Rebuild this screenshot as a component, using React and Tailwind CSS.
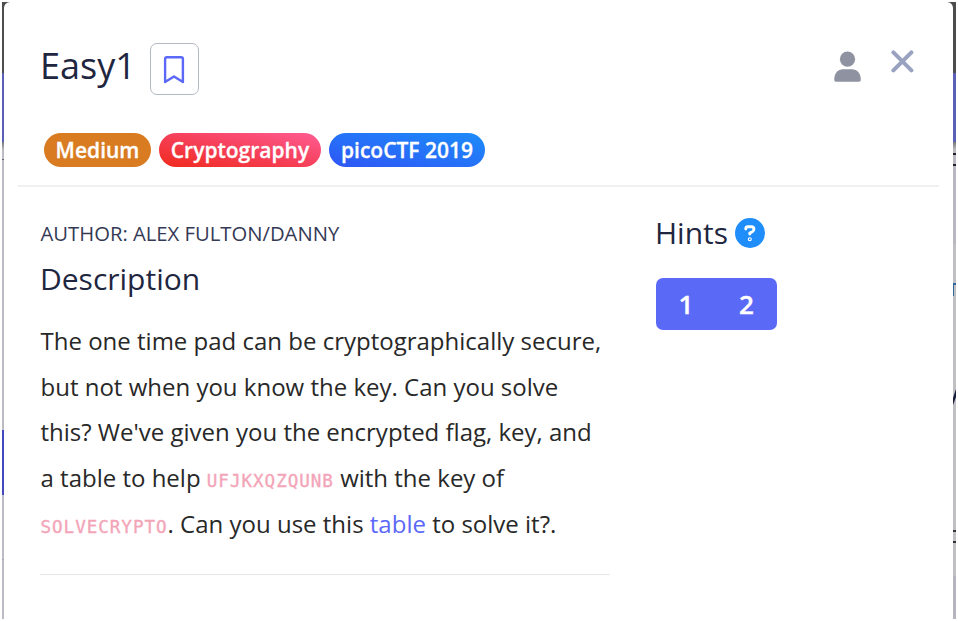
import React from "react";

function Backdrop({ side }) {
  const right = side === "right";
  return (
    <div className={right ? "relative w-[3px] shrink-0 overflow-hidden" : "relative w-[2px] shrink-0 overflow-hidden"}>
      <div className="h-[71px] bg-[#4d4d4d]" />
      <div className="h-[69px] bg-[#5960b5]" />
      <div className="h-[8px] bg-gradient-to-b from-[#777779] to-[#bcbcc1]" />
      {right ? (
        <>
          <div className="h-[94px] bg-[#b9b8c0]" />
          <div className="h-[332px] bg-[#c0bfc4]" />
          <div className="h-[43px] bg-[#b6b5be]" />
          <div className="absolute top-[151px] h-[13px] w-full border-y-2 border-[#222226]" />
          <div className="absolute top-[281px] left-0 h-[13px] w-[3px] border-t-2 border-l border-[#34679a]" />
          <svg className="absolute top-[387px] left-0" width="3" height="16" viewBox="0 0 3 16">
            <path d="M3 0L0 9V16L3 8Z" fill="#171c3c" />
          </svg>
          <div className="absolute top-[528px] h-[13px] w-full border-y-2 border-[#343438]" />
        </>
      ) : (
        <>
          <div className="h-[280px] bg-[#bdbcc4]" />
          <div className="h-[65px] bg-[#444abd]" />
          <div className="h-[124px] bg-[#bdbcc4]" />
          <div className="absolute top-[157px] h-px w-full bg-[#68686c]" />
          <div className="absolute top-[557px] h-px w-full bg-[#aaa9b0]" />
        </>
      )}
    </div>
  );
}

const tags = [
  { label: "Medium", style: "w-[107px] bg-[#d97b21]" },
  { label: "Cryptography", style: "w-[162px] bg-[linear-gradient(12deg,#f02a1c_0%,#f6405a_50%,#ff5c93_100%)]" },
  { label: "picoCTF 2019", style: "w-[156px] bg-[linear-gradient(12deg,#2f55f5_0%,#2572f8_50%,#1c8cf8_100%)]" },
];

function Code({ children }) {
  return (
    <code className="font-['DejaVu_Sans_Mono',monospace] text-[17.6px] leading-none tracking-[0.96px] text-[#f3a5b8] [-webkit-text-stroke:0.35px_#f3a5b8]">{children}</code>
  );
}

export default function App() {
  return (
    <div className="flex h-[621px] w-[958px] overflow-hidden bg-white p-[2px] font-['Open_Sans','Noto_Sans',sans-serif] text-[#1f263f]">
      <div className="flex h-[617px] w-[954px] overflow-hidden bg-[linear-gradient(#4d4d4d_0_20px,transparent_20px)]">
        <Backdrop side="left" />
        <main className="flex w-[949px] shrink-0 flex-col rounded-t-[6px] bg-white">
          <header className="mx-[14px] h-[185px] border-b-2 border-[#f0f0f2] pl-[22px] pr-[24px]">
            <div className="flex h-[131px] items-start justify-between">
              <div className="flex items-start pt-[41px]">
                <h1 className="-mt-[2px] w-[110px] text-[36px] leading-[49px] whitespace-nowrap">Easy1</h1>
                <button className="flex h-[52px] w-[49px] items-center justify-center rounded-[7px] border border-[#b3b8c2]">
                  <svg className="mt-px mr-[2px]" width="22" height="28" viewBox="0 0 22 28" fill="none" stroke="#5b68f8" strokeWidth="2.4" strokeLinejoin="round">
                    <path d="M2.1 2.9Q2.1 1.2 3.9 1.2H18.1Q19.9 1.2 19.9 2.9V26L11 20.4L2.1 26Z" />
                  </svg>
                </button>
              </div>
              <div className="flex items-start gap-[30px]">
                <svg className="mt-[49px]" width="27" height="31" viewBox="0 0 27 31" fill="#8f93a1">
                  <circle cx="13.5" cy="8.2" r="7.6" />
                  <path d="M0.2 28.8C0.2 22 4 18.2 9 18.2H18C23 18.2 26.8 22 26.8 28.8Q26.8 30.8 25 30.8H2Q0.2 30.8 0.2 28.8Z" />
                </svg>
                <svg className="mt-[48px]" width="24" height="24" viewBox="0 0 24 24" fill="none" stroke="#99a2bf" strokeWidth="4" strokeLinecap="round">
                  <path d="M2.4 2.4L20.4 20.4M20.4 2.4L2.4 20.4" />
                </svg>
              </div>
            </div>
            <div className="ml-[4px] flex gap-[8px]">
              {tags.map((tag) => (
                <span key={tag.label} className={`flex h-[34px] items-center justify-center rounded-full pt-[2px] text-[21px] font-semibold whitespace-nowrap text-white [-webkit-text-stroke:0.3px_white] ${tag.style}`}>
                  {tag.label}
                </span>
              ))}
            </div>
          </header>
          <div className="flex pl-[36px]">
            <section className="mr-[46px] w-[570px] border-b border-[#e6e6e9] pt-[31px] pb-[28px]">
              <h6 className="pl-[0.5px] text-[20.25px] leading-[30px] whitespace-nowrap text-[#343a55]">AUTHOR: ALEX FULTON/DANNY</h6>
              <h4 className="mt-[11px] text-[30px] leading-[40px]">Description</h4>
              <p className="mt-[19px] pl-[0.5px] text-[24px] leading-[45.68px] whitespace-nowrap text-[#282828]">
                The one time pad can be cryptographically secure,
                <br />
                but not when you know the key. Can you solve
                <br />
                this? We've given you the encrypted flag, key, and
                <br />
                a table to help <Code>UFJKXQZQUNB</Code> with the key of
                <br />
                <Code>SOLVECRYPTO</Code>. Can you use this <a className="text-[#5b68f8]">table</a> to solve it?.
              </p>
            </section>
            <aside className="pt-[26px]">
              <div className="flex h-[40px] items-center">
                <h4 className="-ml-px w-[80px] text-[30px] leading-[40px]">Hints</h4>
                <span className="flex h-[30px] w-[30px] items-center justify-center rounded-full bg-[#1f8efa]">
                  <svg width="12" height="17" viewBox="0 0 12 17" fill="none" stroke="white" strokeWidth="2.9" strokeLinecap="round" strokeLinejoin="round">
                    <path d="M1.8 4V3.6Q1.8 1.7 4 1.7H7.4Q9.9 1.7 9.9 4.2Q9.9 5.8 8.3 6.7L5.8 8V9" />
                    <circle cx="5.8" cy="14.2" r="0.6" />
                  </svg>
                </span>
              </div>
              <div className="mt-[25px] flex h-[52px] w-[121px] rounded-[7px] bg-[#5b69f7] text-[26px] font-semibold text-white [-webkit-text-stroke:0.4px_white]">
                <button className="w-[60px]">1</button>
                <button className="w-[61px]">2</button>
              </div>
            </aside>
          </div>
        </main>
        <Backdrop side="right" />
      </div>
    </div>
  );
}
